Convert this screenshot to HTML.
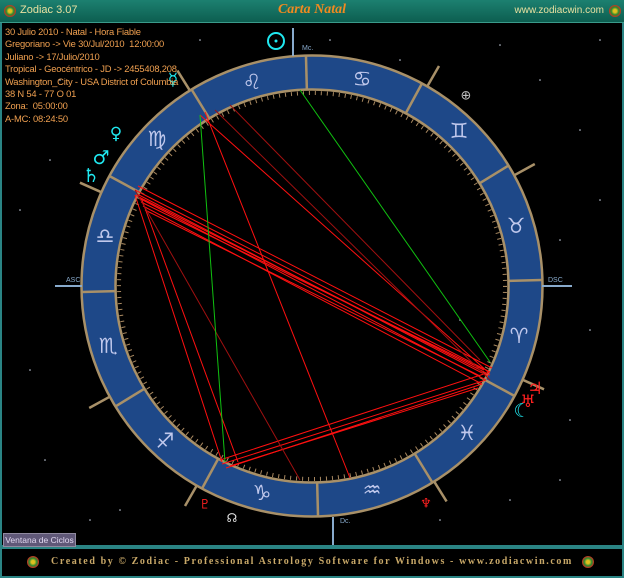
<!DOCTYPE html>
<html><head><meta charset="utf-8"><style>
html,body{margin:0;padding:0;width:624px;height:578px;overflow:hidden;background:#000}
#t{position:absolute;left:0;top:0;width:624px;height:22px;background:linear-gradient(#1c8070,#0d5e50);border-bottom:1px solid #3a9a8a}
#t .a{position:absolute;left:20px;top:4px;font:11px "Liberation Sans",sans-serif;color:#e8e0a0}
#t .b{position:absolute;left:0;width:624px;top:2px;text-align:center;font:italic bold 14px "Liberation Serif",serif;color:#f08a20}
#t .c{position:absolute;right:20px;top:5px;font:10px "Liberation Sans",sans-serif;color:#e8e0a0}
.logo{position:absolute;width:12px;height:12px;border-radius:50%;background:radial-gradient(circle,#e0c020 20%,#2a8a30 45%,#d03020 70%,#305090)}
#m{position:absolute;left:0;top:23px;width:620px;height:522px;border:2px solid #2a8484;border-top:none}
#f{position:absolute;left:0;top:547px;width:620px;height:27px;border:2px solid #2a8484;background:#000}
#f span{position:absolute;left:0;width:620px;top:7px;text-align:center;font:bold 10px "Liberation Serif",serif;letter-spacing:1.6px;color:#c8a868}
#info{position:absolute;left:5px;top:26px;font:9.4px/12.4px "Liberation Sans",sans-serif;color:#f0a050;white-space:pre;letter-spacing:-0.2px}
#btn{position:absolute;left:3px;top:533px;width:71px;height:12px;background:#605878;border:1px solid #908aa0;font:8.5px "Liberation Sans",sans-serif;color:#e0d8f0;line-height:12px;text-align:center;white-space:nowrap;overflow:hidden}
svg{position:absolute;left:0;top:0}
</style></head><body>
<div id="m"></div>
<svg width="624" height="578" font-family="DejaVu Sans, sans-serif">
<g fill="#c8d0e0">
<circle cx="60" cy="80" r=".8"/><circle cx="200" cy="40" r=".8"/><circle cx="400" cy="60" r=".8"/><circle cx="500" cy="45" r=".8"/><circle cx="540" cy="80" r=".8"/><circle cx="580" cy="130" r=".8"/><circle cx="600" cy="200" r=".8"/><circle cx="560" cy="240" r=".8"/><circle cx="590" cy="330" r=".8"/><circle cx="570" cy="420" r=".8"/><circle cx="510" cy="500" r=".8"/><circle cx="560" cy="480" r=".8"/><circle cx="30" cy="370" r=".8"/><circle cx="45" cy="460" r=".8"/><circle cx="20" cy="210" r=".8"/><circle cx="50" cy="160" r=".8"/><circle cx="120" cy="510" r=".8"/><circle cx="460" cy="320" r=".8"/><circle cx="600" cy="40" r=".8"/><circle cx="90" cy="520" r=".8"/><circle cx="440" cy="520" r=".8"/><circle cx="330" cy="40" r=".8"/>
</g>
<g stroke="#a89068" stroke-width="2.5">
<line x1="542" y1="286" x2="566" y2="286" transform="rotate(-28.7 312 286)"/>
<line x1="542" y1="286" x2="566" y2="286" transform="rotate(-60 312 286)"/>
<line x1="542" y1="286" x2="566" y2="286" transform="rotate(-122 312 286)"/>
<line x1="542" y1="286" x2="566" y2="286" transform="rotate(-156 312 286)"/>
<line x1="542" y1="286" x2="566" y2="286" transform="rotate(-208.7 312 286)"/>
<line x1="542" y1="286" x2="566" y2="286" transform="rotate(-240 312 286)"/>
<line x1="542" y1="286" x2="566" y2="286" transform="rotate(-302 312 286)"/>
<line x1="542" y1="286" x2="566" y2="286" transform="rotate(-336 312 286)"/>
</g>
<circle cx="312" cy="286" r="213.5" fill="none" stroke="#1e4888" stroke-width="33"/>
<circle cx="312" cy="286" r="230.5" fill="none" stroke="#a89068" stroke-width="2.5"/>
<circle cx="312" cy="286" r="196.5" fill="none" stroke="#a89068" stroke-width="2.5"/>
<circle cx="312" cy="286" r="193" fill="none" stroke="#a88860" stroke-width="4" stroke-dasharray="1 5"/>
<g stroke="#a89068" stroke-width="2.5">
<line x1="509" y1="286" x2="542" y2="286" transform="rotate(-1.5 312 286)"/>
<line x1="509" y1="286" x2="542" y2="286" transform="rotate(-31.5 312 286)"/>
<line x1="509" y1="286" x2="542" y2="286" transform="rotate(-61.5 312 286)"/>
<line x1="509" y1="286" x2="542" y2="286" transform="rotate(-91.5 312 286)"/>
<line x1="509" y1="286" x2="542" y2="286" transform="rotate(-121.5 312 286)"/>
<line x1="509" y1="286" x2="542" y2="286" transform="rotate(-151.5 312 286)"/>
<line x1="509" y1="286" x2="542" y2="286" transform="rotate(-181.5 312 286)"/>
<line x1="509" y1="286" x2="542" y2="286" transform="rotate(-211.5 312 286)"/>
<line x1="509" y1="286" x2="542" y2="286" transform="rotate(-241.5 312 286)"/>
<line x1="509" y1="286" x2="542" y2="286" transform="rotate(-271.5 312 286)"/>
<line x1="509" y1="286" x2="542" y2="286" transform="rotate(-301.5 312 286)"/>
<line x1="509" y1="286" x2="542" y2="286" transform="rotate(-331.5 312 286)"/>
</g>
<g fill="#c0c8ec" font-size="21" text-anchor="middle" dominant-baseline="central">
<text x="516" y="226">♉&#xFE0E;</text><text x="459" y="131">♊&#xFE0E;</text><text x="362" y="79">♋&#xFE0E;</text><text x="252" y="82">♌&#xFE0E;</text><text x="157" y="139">♍&#xFE0E;</text><text x="105" y="236">♎&#xFE0E;</text><text x="108" y="346">♏&#xFE0E;</text><text x="165" y="441">♐&#xFE0E;</text><text x="262" y="493">♑&#xFE0E;</text><text x="372" y="490">♒&#xFE0E;</text><text x="467" y="433">♓&#xFE0E;</text><text x="519" y="336">♈&#xFE0E;</text>
</g>
<g stroke="#ff1010" stroke-width="1" fill="none">
<line x1="135" y1="190" x2="490" y2="372"/><line x1="137" y1="194" x2="488" y2="376"/><line x1="139" y1="198" x2="486" y2="380"/><line x1="141" y1="202" x2="484" y2="370"/><line x1="143" y1="206" x2="482" y2="384"/><line x1="145" y1="210" x2="480" y2="376"/>
<line x1="135" y1="195" x2="490" y2="375"/><line x1="138" y1="186" x2="492" y2="368"/>
<line x1="220" y1="460" x2="490" y2="372"/><line x1="222" y1="464" x2="486" y2="380"/><line x1="226" y1="468" x2="482" y2="384"/><line x1="230" y1="466" x2="478" y2="388"/>
<line x1="135" y1="195" x2="222" y2="462"/><line x1="142" y1="200" x2="238" y2="462"/>
<line x1="200" y1="115" x2="488" y2="372"/><line x1="205" y1="112" x2="350" y2="478"/>
</g>
<g stroke="#a01010" stroke-width="1"><line x1="215" y1="110" x2="490" y2="380"/><line x1="135" y1="190" x2="300" y2="480"/><line x1="230" y1="105" x2="480" y2="360"/></g>
<g stroke="#10c010" stroke-width="1"><line x1="200" y1="115" x2="225" y2="462"/><line x1="300" y1="90" x2="490" y2="362"/></g>
<g stroke="#88aacc" stroke-width="2"><line x1="293" y1="28" x2="293" y2="56"/><line x1="333" y1="517" x2="333" y2="545"/><line x1="55" y1="286" x2="82" y2="286"/><line x1="542" y1="286" x2="572" y2="286"/></g>
<g font-family="Liberation Sans,sans-serif" font-size="7" fill="#88aacc"><text x="302" y="50">Mc.</text><text x="340" y="523">Dc.</text><text x="66" y="282">ASC</text><text x="548" y="282">DSC</text></g>
<g font-size="17" text-anchor="middle" dominant-baseline="central">
<circle cx="276" cy="41" r="8" fill="none" stroke="#20e8f0" stroke-width="2"/><circle cx="276" cy="41" r="1.5" fill="#20e8f0"/>
<text x="173" y="80" fill="#20e8f0">☿</text><text x="116" y="134" fill="#20e8f0">♀</text><text x="101" y="158" fill="#20e8f0" font-size="19">♂</text><text x="91" y="176" fill="#20e8f0" font-size="19">♄</text>
<text x="466" y="96" fill="#c0c0c0" font-size="13">⊕</text>
<text x="535" y="389" fill="#ff2020">♃</text><text x="528" y="402" fill="#ff2020">♅</text><text x="522" y="411" fill="#20e8f0" font-size="19">☾</text>
<text x="205" y="505" fill="#ff2020" font-size="13">♇</text><text x="426" y="504" fill="#ff2020" font-size="13">♆</text><text x="232" y="518" fill="#e0e0e0" font-size="12">☊</text>
</g>
</svg>
<div id="t"><div class="logo" style="left:4px;top:5px"></div><span class="a">Zodiac 3.07</span><span class="b">Carta Natal</span><span class="c">www.zodiacwin.com</span><div class="logo" style="left:609px;top:5px"></div></div>
<div id="info">30 Julio 2010 - Natal - Hora Fiable
Gregoriano -> Vie 30/Jul/2010  12:00:00
Juliano -> 17/Julio/2010
Tropical - Geocéntrico - JD -> 2455408,208
Washington_City - USA District of Columbia
38 N 54 - 77 O 01
Zona:  05:00:00
A-MC: 08:24:50</div>
<div id="btn">Ventana de Ciclos</div>
<div id="f"><div class="logo" style="left:25px;top:7px"></div><span>Created by © Zodiac - Professional Astrology Software for Windows - www.zodiacwin.com</span><div class="logo" style="left:580px;top:7px"></div></div>
</body></html>
